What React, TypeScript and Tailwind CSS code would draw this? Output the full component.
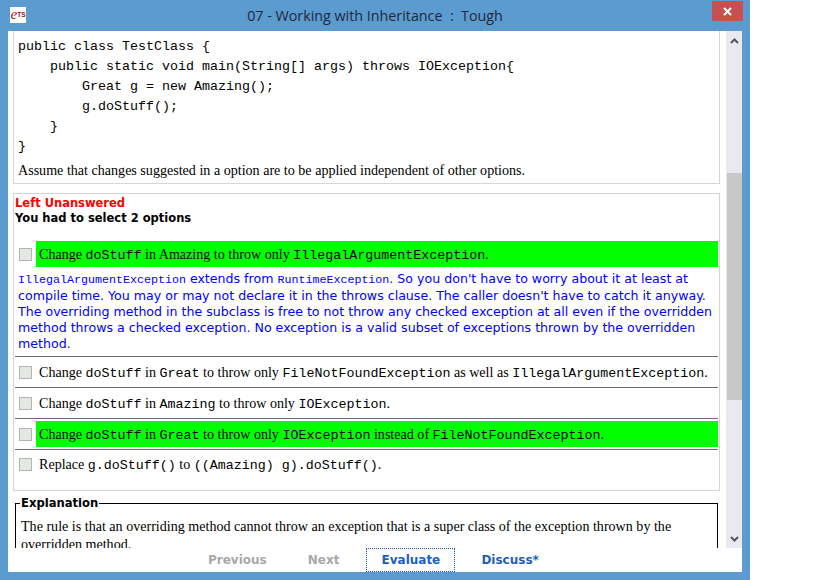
import { ReactNode } from 'react'

const Code = ({ children }: { children: ReactNode }) => (
  <code className="font-['Liberation_Mono',monospace] text-[13.33px]">{children}</code>
)

function Checkbox() {
  return <span className="block w-[13px] h-[13px] shrink-0 border border-[#b4b4b4] bg-[#e4e8e2]" />
}

interface OptionRowProps {
  children: ReactNode
  correct?: boolean
  divider?: boolean
}

function OptionRow({ children, correct, divider = true }: OptionRowProps) {
  return (
    <div className={divider ? 'h-[31px] flex items-center border-b border-[#6e6a6e]' : 'h-[26px] flex items-center'}>
      <div className="ml-[4px] mr-[4px]">
        <Checkbox />
      </div>
      <div className={correct ? 'flex-1 h-[26px] flex items-center pl-[3px] bg-[#00ff00]' : 'flex-1 h-[26px] flex items-center pl-[3px]'}>
        <span className="whitespace-nowrap pt-px">{children}</span>
      </div>
    </div>
  )
}

function Scrollbar() {
  return (
    <div className="w-4 shrink-0 bg-[#e9e9ef] flex flex-col items-center">
      <div className="h-[13px] w-full flex items-end justify-center">
        <svg width="9" height="6" viewBox="0 0 9 6">
          <path d="M1 5 L4.5 1.5 L8 5" fill="none" stroke="#555560" strokeWidth="2" />
        </svg>
      </div>
      <div className="mt-[129px] h-[227px] w-[15px] bg-[#c8c8c8]" />
      <div className="flex-1" />
      <div className="h-[12px] w-full flex items-start justify-center">
        <svg width="9" height="6" viewBox="0 0 9 6">
          <path d="M1 1 L4.5 4.5 L8 1" fill="none" stroke="#555560" strokeWidth="2" />
        </svg>
      </div>
    </div>
  )
}

export default function App() {
  return (
    <div className="w-[819px] h-[580px] bg-white overflow-hidden">
      <div className="w-[750px] h-[580px] bg-[#5c9bd0] flex flex-col pb-2">
        {/* Title bar */}
        <div className="h-[31px] shrink-0 relative flex items-center justify-center">
          <div className="absolute left-[10px] top-[7px] w-4 h-4 bg-white flex items-center justify-center text-[#a01020] font-['Liberation_Sans',sans-serif] leading-none">
            <span className="italic font-['Liberation_Serif',serif] text-[15px] -mt-[2px]">e</span>
            <span className="text-[6.5px] font-bold">TS</span>
          </div>
          <span className="font-['Open_Sans',sans-serif] text-[14.3px] text-[#1d2a3c] pt-px whitespace-pre">
            07 - Working with Inheritance  :  Tough
          </span>
          <div className="absolute left-[712px] top-px w-[31px] h-5 bg-[#c75050] flex items-center justify-center">
            <svg width="9" height="9" viewBox="0 0 9 9">
              <path d="M1 1 L8 8 M8 1 L1 8" stroke="#fff" strokeWidth="2" />
            </svg>
          </div>
        </div>

        <div className="mx-2 flex-1 min-h-0 bg-white flex flex-col">
          <div className="flex-1 min-h-0 flex">
            {/* Question pane */}
            <div className="flex-1 min-w-0 overflow-hidden pl-[5px] pr-[6px] font-['Liberation_Serif',serif] text-[14.08px] text-black">
              <div className="h-[153px] border-x border-b border-[#d4d8d4] pl-1 pt-[6px]">
                <pre className="font-['Liberation_Mono',monospace] text-[13.33px] leading-5">{`public class TestClass {
    public static void main(String[] args) throws IOException{
        Great g = new Amazing();
        g.doStuff();
    }
}`}</pre>
                <p className="mt-[3px] leading-5">
                  Assume that changes suggested in a option are to be applied independent of other options.
                </p>
              </div>

              <div className="mt-[9px] h-[298px] border border-[#d4d4d4] pl-px pr-px">
                <div className="pt-[2px] font-['DejaVu_Sans',sans-serif] text-[11.5px] font-bold leading-[15px]">
                  <p className="text-[#ff0000]">Left Unanswered</p>
                  <p>You had to select 2 options</p>
                </div>
                <div className="mt-[15px] mb-[3px]">
                  <OptionRow correct divider={false}>
                    Change <Code>doStuff</Code> in Amazing to throw only <Code>IllegalArgumentException</Code>.
                  </OptionRow>
                </div>
                <div className="h-[87px] border-b border-[#6e6a6e] pl-[3px] pt-px font-['DejaVu_Sans',sans-serif] text-[12.6px] leading-4 text-[#0000ff]">
                  <p>
                    <code className="font-['Liberation_Mono',monospace] text-[11.67px]">IllegalArgumentException</code> extends from{' '}
                    <code className="font-['Liberation_Mono',monospace] text-[11.67px]">RuntimeException</code>. So you don't have to worry about it at least at compile time. You may or may not declare it in the throws clause. The caller doesn't have to catch it anyway. The overriding method in the subclass is free to not throw any checked exception at all even if the overridden method throws a checked exception. No exception is a valid subset of exceptions thrown by the overridden method.
                  </p>
                </div>
                <OptionRow>
                  Change <Code>doStuff</Code> in <Code>Great</Code> to throw only <Code>FileNotFoundException</Code> as well as <Code>IllegalArgumentException</Code>.
                </OptionRow>
                <OptionRow>
                  Change <Code>doStuff</Code> in <Code>Amazing</Code> to throw only <Code>IOException</Code>.
                </OptionRow>
                <OptionRow correct>
                  Change <Code>doStuff</Code> in <Code>Great</Code> to throw only <Code>IOException</Code> instead of <Code>FileNotFoundException</Code>.
                </OptionRow>
                <div className="mt-[1px]">
                  <OptionRow divider={false}>
                    Replace <Code>g.doStuff()</Code> to <Code>((Amazing) g).doStuff()</Code>.
                  </OptionRow>
                </div>
              </div>

              <fieldset className="mt-[4px] mx-[2px] border border-black pl-[5px] pr-[5px] pb-2">
                <legend className="-ml-px px-px font-['DejaVu_Sans',sans-serif] text-[11.6px] font-bold leading-4">Explanation</legend>
                <p className="mt-[6px] leading-[18px]">
                  The rule is that an overriding method cannot throw an exception that is a super class of the exception thrown by the overridden method.
                </p>
              </fieldset>
            </div>
            <Scrollbar />
          </div>

          {/* Footer buttons */}
          <div className="h-[24px] shrink-0 relative flex items-center font-['DejaVu_Sans',sans-serif] text-[12px] font-bold">
            <span className="ml-[200px] text-[#a8a8a8]">Previous</span>
            <span className="ml-[41px] text-[#a8a8a8]">Next</span>
            <span className="ml-[27px] w-[89px] h-[24px] flex items-center justify-center border border-dotted border-[#1a4fa0] text-[#1a5fc0]">Evaluate</span>
            <span className="ml-[26px] text-[#1a5fc0]">Discuss*</span>
          </div>
        </div>
      </div>
    </div>
  )
}
